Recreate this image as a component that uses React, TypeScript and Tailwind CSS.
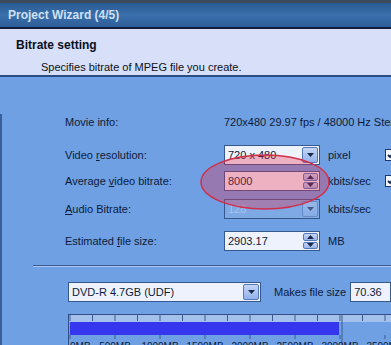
const font = "font-['Tahoma','Liberation_Sans',sans-serif]";

function DropArrow() {
  return (
    <svg width="7" height="4" viewBox="0 0 7 4">
      <path d="M0 0h7L3.5 4z" fill="#1b2a4a" />
    </svg>
  );
}

function Combo({ value, disabled, w = "w-[96px]" }: { value: string; disabled?: boolean; w?: string }) {
  return (
    <div className={`flex h-[20px] shrink-0 ${w} items-stretch border border-[#35598f] ${disabled ? "bg-[#7ea9e4]" : "bg-[#eef2fc]"}`}>
      <div className={`flex flex-1 items-center pl-[3px] text-[11px] ${disabled ? "text-[#a9c3ee]" : "text-[#0d1b3a]"}`}>
        {value}
      </div>
      <div className={`m-[1px] flex w-[16px] items-center justify-center rounded-[2px] border border-[#5578b8] bg-gradient-to-b ${disabled ? "from-[#a6c0ec] to-[#8fb0e6] opacity-60" : "from-[#c5d6f6] to-[#94b1ea]"}`}>
        <DropArrow />
      </div>
    </div>
  );
}

function Spin({ value }: { value: string }) {
  return (
    <div className="flex h-[20px] w-[96px] shrink-0 items-stretch border border-[#35598f] bg-[#eef2fc]">
      <div className="flex flex-1 items-center pl-[3px] text-[11px] text-[#0d1b3a]">{value}</div>
      <div className="m-[1px] flex w-[15px] flex-col gap-[1px]">
        <div className="flex flex-1 items-center justify-center rounded-[2px] border border-[#5578b8] bg-gradient-to-b from-[#c5d6f6] to-[#9ab5ea]">
          <svg width="7" height="4" viewBox="0 0 7 4"><path d="M0 4h7L3.5 0z" fill="#1b2a4a" /></svg>
        </div>
        <div className="flex flex-1 items-center justify-center rounded-[2px] border border-[#5578b8] bg-gradient-to-b from-[#c5d6f6] to-[#9ab5ea]">
          <DropArrow />
        </div>
      </div>
    </div>
  );
}

function Check() {
  return (
    <div className="ml-auto mr-[-6px] flex h-[12px] w-[12px] shrink-0 items-center justify-center border border-[#1c3868] bg-[#f2f5fc]">
      <svg width="8" height="8" viewBox="0 0 8 8"><path d="M1 4l2 2 4-5" stroke="#14264a" strokeWidth="1.8" fill="none" /></svg>
    </div>
  );
}

function Label({ children }: { children: React.ReactNode }) {
  return <div className="w-[159px] shrink-0 text-[11px] text-[#0d1b3a]">{children}</div>;
}

export default function App() {
  const minor = Array.from({ length: 15 }, (_, i) => 2 + i * 22.5);
  const labels = ["0MB", "500MB", "1000MB", "1500MB", "2000MB", "2500MB", "3000MB", "3500MB"];
  return (
    <div className={`relative h-[345px] w-[391px] overflow-hidden bg-[#6fa0e3] ${font}`}>
      {/* title bar */}
      <div className="h-[3px] bg-[#3d4c5c]" />
      <div className="flex h-[24px] items-center bg-gradient-to-b from-[#2a5a92] via-[#3a70ac] to-[#2d5e98] pl-[8px] text-[12px] font-bold text-[#cfe0f4]">
        Project Wizard (4/5)
      </div>
      <div className="h-[2px] bg-[#141c3c]" />
      {/* header */}
      <div className="h-[46px] bg-[#d7e0f8] pl-[16px] pt-[7px]">
        <div className="text-[12px] font-bold text-[#0a0f22]">Bitrate setting</div>
        <div className="mt-[5px] pl-[25px] text-[11px] text-[#0a0f22]">Specifies bitrate of MPEG file you create.</div>
      </div>
      <div className="h-[2px] bg-[#2b4c84]" />
      {/* body */}
      <div className="border-l-[2px] border-[#3b5f99] pb-[20px]">
        <div className="mt-[37px] flex h-[16px] items-center pl-[63px] text-[11px] text-[#0d1b3a]">
          <Label>Movie info:</Label>
          <div className="whitespace-nowrap">720x480 29.97 fps / 48000 Hz Stereo</div>
        </div>
        <div className="mt-[15px] flex h-[20px] items-center pl-[63px]">
          <Label>Video <u>r</u>esolution:</Label>
          <Combo value="720 x 480" />
          <div className="ml-[8px] text-[11px] text-[#0d1b3a]">pixel</div>
          <Check />
        </div>
        <div className="mt-[6px] flex h-[20px] items-center pl-[63px]">
          <Label>Average <u>v</u>ideo bitrate:</Label>
          <Spin value="8000" />
          <div className="ml-[8px] text-[11px] text-[#0d1b3a]">kbits/sec</div>
          <Check />
        </div>
        <div className="mt-[8px] flex h-[20px] items-center pl-[63px]">
          <Label><u>A</u>udio Bitrate:</Label>
          <Combo value="128" disabled />
          <div className="ml-[8px] text-[11px] text-[#0d1b3a]">kbits/sec</div>
        </div>
        <div className="mt-[12px] flex h-[20px] items-center pl-[63px]">
          <Label>Estimated <u>f</u>ile size:</Label>
          <Spin value="2903.17" />
          <div className="ml-[8px] text-[11px] text-[#0d1b3a]">MB</div>
        </div>
        <div className="ml-[31px] mt-[14px] h-[2px] border-t border-b border-t-[#3a5a90] border-b-[#a9c6f0]" />
        <div className="mt-[15px] flex h-[20px] items-center pl-[66px]">
          <Combo value="DVD-R 4.7GB (UDF)" w="w-[193px]" />
          <div className="ml-[13px] text-[11px] text-[#0d1b3a]">Makes file size</div>
          <div className="ml-[4px] flex h-[20px] flex-1 items-center border border-[#35598f] bg-[#eef2fc] pl-[3px] text-[11px] text-[#0d1b3a]">
            70.36
          </div>
        </div>
        <div className="ml-[66px] mt-[12px] h-[40px]">
          <svg width="325" height="40" viewBox="0 0 325 40" className="block">
            <rect x="0" y="0" width="325" height="8" fill="#a6c0ec" />
            <line x1="0.5" y1="0" x2="0.5" y2="40" stroke="#2f4f86" />
            <line x1="0" y1="0.5" x2="325" y2="0.5" stroke="#2f4f86" />
            {minor.map((x) => (
              <line key={x} x1={x} y1="0" x2={x} y2="7" stroke="#3a5a90" />
            ))}
            <rect x="2" y="8" width="269" height="13" fill="#3636ee" />
            <line x1="274" y1="0" x2="274" y2="40" stroke="#3a5a90" />
            {labels.map((l, i) => (
              <g key={l}>
                <line x1={2 + i * 45} y1="21" x2={2 + i * 45} y2="25" stroke="#3a5a90" />
                <text
                  x={i === 0 ? 2 : 2 + i * 45}
                  y="36"
                  fontSize="10"
                  fill="#0d1b3a"
                  textAnchor={i === 0 ? "start" : "middle"}
                  fontFamily="Tahoma, 'Liberation Sans', sans-serif"
                >
                  {l}
                </text>
              </g>
            ))}
          </svg>
        </div>
      </div>
      {/* red ellipse annotation */}
      <svg className="pointer-events-none absolute left-[198px] top-[152px]" width="136" height="62" viewBox="0 0 136 62">
        <ellipse cx="67" cy="30" rx="64" ry="27" fill="rgba(235,40,70,0.32)" stroke="#d0304a" strokeWidth="1.5" />
      </svg>
    </div>
  );
}
